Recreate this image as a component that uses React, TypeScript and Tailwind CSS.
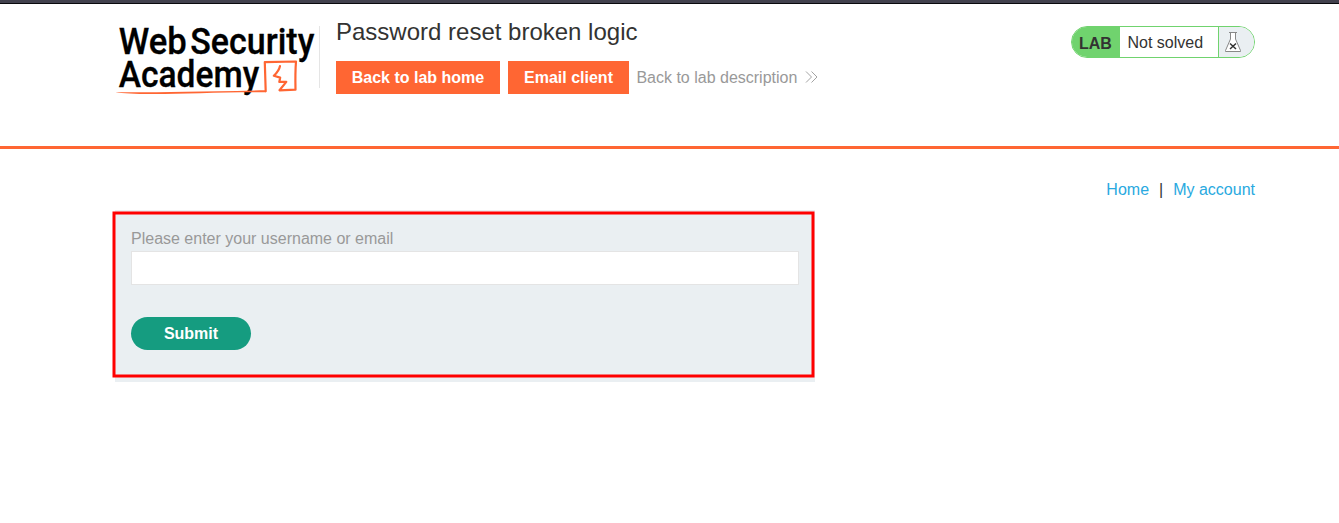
function Logo() {
  return (
    <svg width="204" height="80" viewBox="115 20 204 80" className="block shrink-0 overflow-visible" aria-label="Web Security Academy">
      <g fill="#000" stroke="#000" strokeWidth="0.3" fontFamily="Roboto, sans-serif" fontWeight="500" fontSize="37">
        <text x="118.7" y="54.3" textLength="68" lengthAdjust="spacingAndGlyphs">Web</text>
        <text x="190.3" y="54.3" textLength="124" lengthAdjust="spacingAndGlyphs">Security</text>
        <text x="118.7" y="87" textLength="140.5" lengthAdjust="spacingAndGlyphs">Academy</text>
      </g>
      <g fill="none" stroke="#ff6633" strokeLinejoin="round" strokeLinecap="round">
        <path d="M265.7 91.2 L264.8 62.2 L296 61.5 C295.2 71 295.3 80 295.5 89.7 L279.5 90.3 L286.3 81.9 L279.3 81.9 L280.2 77.6 L273.8 75.8 C278.3 71.6 279.2 70 280 66" strokeWidth="2.2" />
      </g>
      <path d="M115.5 92.2 C150 92.6 200 91.5 266 90.2 L266 92.2 C220 92 180 94.2 150 94 C136 94 122 93.4 115.5 92.2Z" fill="#ff6633" />
    </svg>
  );
}

function LabStatus() {
  return (
    <div className="mt-[6px] flex h-8 w-[184px] overflow-hidden rounded-full border border-[#70d36e] bg-white text-base text-[#333332]">
      <span className="w-12 bg-[#70d36e] pl-[7px] font-bold leading-[34px]">LAB</span>
      <span className="w-[98px] pl-[7.5px] leading-8">Not solved</span>
      <span className="flex flex-1 border-l border-[#70d36e] bg-[#eaeff2] pl-[5px] pt-1">
        <svg width="18" height="22" viewBox="0 0 18 22">
          <path d="M5 1.5H13M6.5 1.5V8L1.5 19.5V20.5H16.5V19.5L11.5 8V1.5" fill="#fff" stroke="#888" strokeWidth="1" />
          <path d="M6 12.5L12 18M12 12.5L6 18" stroke="#333" strokeWidth="1.5" />
        </svg>
      </span>
    </div>
  );
}

export default function App() {
  return (
    <div className="h-[523px] overflow-hidden bg-white font-['Liberation_Sans',Arial,sans-serif] text-base text-[#333332]">
      <div className="h-1 border-b border-[#09090c] bg-[#42414d]" />
      <header className="h-[145px] border-b-[3px] border-[#ff6633] pl-[115px] pr-[84px] pt-4">
        <div className="flex items-start">
          <Logo />
          <div className="mt-[6px] h-[62px] w-px shrink-0 bg-[#e5e5e5]" />
          <div className="ml-4 flex-1">
            <h2 className="h-[41px] text-2xl leading-6">Password reset broken logic</h2>
            <div className="flex h-[33px] items-center leading-[33px]">
              <a className="mr-2 w-[164px] bg-[#ff6633] text-center font-bold text-white">Back to lab home</a>
              <a className="w-[121px] bg-[#ff6633] text-center font-bold text-white">Email client</a>
              <a className="ml-[7.4px] flex items-center text-[#999]">
                Back to lab description
                <svg width="13" height="12" viewBox="0 0 13 12" className="-mt-px ml-2" fill="none" stroke="#999" strokeWidth="0.9">
                  <path d="M1 .5L6.5 6L1 11.5M6.5 .5L12 6L6.5 11.5" />
                </svg>
              </a>
            </div>
          </div>
          <LabStatus />
        </div>
      </header>
      <main className="pl-[115px] pr-[84px]">
        <nav className="flex h-[61px] justify-end pt-[29px] leading-6 text-[#29a9e0]">
          <a>Home</a>
          <span className="mx-[10px] text-[#333332]">|</span>
          <a>My account</a>
        </nav>
        <section className="relative h-[172px] w-[700px] bg-[#eaeff2] px-4 pt-[17px]">
          <label htmlFor="username" className="block h-6 leading-6 text-[#999]">Please enter your username or email</label>
          <input id="username" className="block h-[34px] w-[668px] border border-[#e4e4e4] bg-white px-2 outline-none" />
          <button className="mt-8 block h-[33px] w-[120px] rounded-full bg-[#159c80] font-bold text-white">Submit</button>
          <svg width="704" height="170" className="pointer-events-none absolute -left-[3px] top-0">
            <rect x="2" y="3" width="699" height="163" fill="none" stroke="#ff0000" strokeWidth="3" />
          </svg>
        </section>
      </main>
    </div>
  );
}
